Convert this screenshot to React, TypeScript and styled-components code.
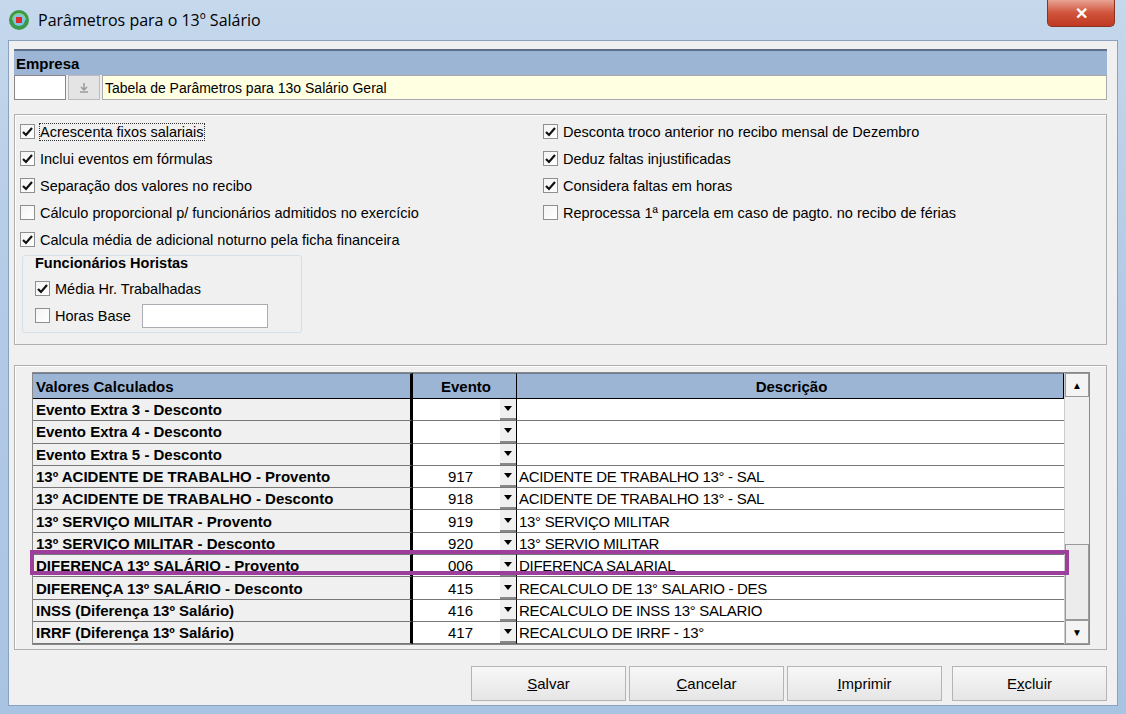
import styled, { createGlobalStyle } from "styled-components";

const Global = createGlobalStyle`
  html, body { margin: 0; padding: 0; }
  body { width: 1126px; height: 714px; overflow: hidden; font-family: "Liberation Sans", Tahoma, sans-serif; }
`;

const Frame = styled.div`
  width: 1126px;
  height: 714px;
  box-sizing: border-box;
  background: linear-gradient(180deg, #c5d8ec 0%, #b3cbe6 40%, #a9c3e2 100%);
  padding: 0 8px 8px 8px;
  display: flex;
  flex-direction: column;
`;

const TitleBar = styled.div`
  height: 42px;
  display: flex;
  align-items: center;
  gap: 8px;
  position: relative;
  font-family: "Open Sans", "Liberation Sans", sans-serif;
  font-size: 16px;
  color: #000;
`;

const CloseBtn = styled.div`
  position: absolute;
  right: 3px;
  top: 0;
  width: 66px;
  height: 26px;
  border-radius: 0 0 5px 5px;
  background: linear-gradient(180deg, #e8a493 0%, #d0533b 50%, #c03a22 100%);
  border: 1px solid #8c3020;
  border-top: none;
  display: flex;
  align-items: center;
  justify-content: center;
  color: #fff;
  font-weight: bold;
  font-size: 16px;
`;

const Body = styled.div`
  flex: 1;
  background: #f0f0f0;
  border: 1px solid #8aa2c0;
  padding: 8px 10px 4px 5px;
  display: flex;
  flex-direction: column;
`;

const SectionHeader = styled.div`
  height: 24px;
  background: #9db5d4;
  border-top: 2px solid #5d6f88;
  font-weight: bold;
  font-size: 15px;
  display: flex;
  align-items: center;
  padding-left: 2px;
`;

const EmpresaRow = styled.div`
  display: flex;
  height: 25px;
  gap: 2px;
`;

const SmallInput = styled.div`
  width: 50px;
  background: #fff;
  border: 1px solid #888;
`;

const LookupBtn = styled.div`
  width: 30px;
  background: #e4e4e4;
  border: 1px solid #bbb;
  display: flex;
  align-items: center;
  justify-content: center;
`;

const YellowField = styled.div`
  flex: 1;
  background: #ffffe1;
  border: 1px solid #aaa;
  font-size: 14px;
  display: flex;
  align-items: center;
  padding-left: 2px;
`;

const Panel = styled.div<{ $h: number; $mt: number }>`
  margin-top: ${(p) => p.$mt}px;
  height: ${(p) => p.$h}px;
  border: 1px solid #b0b0b0;
  box-shadow: inset 1px 1px 0 #fff;
  box-sizing: border-box;
`;

const CheckGrid = styled.div`
  display: grid;
  grid-template-columns: 523px 1fr;
  padding: 3px 0 0 5px;
`;

const Col = styled.div`
  display: flex;
  flex-direction: column;
`;

const CheckRow = styled.label`
  height: 27px;
  display: flex;
  align-items: center;
  gap: 5px;
  font-size: 14.5px;
  color: #000;
`;

const Box = styled.span`
  width: 15px;
  height: 15px;
  box-sizing: border-box;
  border: 1px solid #8e8f8f;
  background: linear-gradient(135deg, #f4f4f4, #fff);
  display: flex;
  align-items: center;
  justify-content: center;
`;

const Focused = styled.span`
  outline: 1px dotted #333;
`;

const GroupBox = styled.div`
  margin: 2px 0 0 2px;
  width: 280px;
  height: 78px;
  box-sizing: border-box;
  border: 1px solid #d5dfe5;
  border-radius: 3px;
  padding: 0 0 0 12px;
`;

const GroupTitle = styled.div`
  font-weight: bold;
  font-size: 14.5px;
  margin: -1px 0 0 0;
  height: 20px;
`;

const HorasInput = styled.div`
  width: 124px;
  height: 22px;
  background: #fff;
  border: 1px solid #abadb3;
  margin-left: 6px;
`;

const GridWrap = styled.div`
  margin: 6px 0 0 17px;
  width: 1056px;
  border: 1px solid #888;
  display: flex;
  position: relative;
`;

const Table = styled.div`
  flex: 1;
  display: grid;
  grid-template-columns: 380px 104px 1fr;
`;

const HeadCell = styled.div<{ $center?: boolean; $thick?: boolean }>`
  height: 24px;
  background: #9db5d4;
  font-weight: bold;
  font-size: 15px;
  display: flex;
  align-items: center;
  justify-content: ${(p) => (p.$center ? "center" : "flex-start")};
  padding-left: 3px;
  border-top: 1px solid #6b7d96;
  border-right: ${(p) => (p.$thick ? "3px solid #000" : "1px solid #000")};
  border-bottom: 1px solid #000;
`;

const NameCell = styled.div`
  height: 22.3px;
  box-sizing: border-box;
  background: #f0f0f0;
  border-right: 3px solid #000;
  border-bottom: 1px solid #777;
  font-weight: bold;
  font-size: 15px;
  padding-left: 3px;
  display: flex;
  align-items: center;
  white-space: nowrap;
`;

const EventCell = styled.div`
  height: 22.3px;
  box-sizing: border-box;
  background: #fff;
  border-bottom: 1px solid #777;
  border-right: 1px solid #000;
  display: flex;
  align-items: center;
  font-size: 15px;
  font-family: "Liberation Sans Narrow", "Liberation Sans", sans-serif;
`;

const EventValue = styled.span`
  flex: 1;
  text-align: center;
  padding-left: 8px;
`;

const DropBtn = styled.span`
  width: 16px;
  height: 100%;
  background: #f0f0f0;
  border-bottom: 2px solid #888;
  box-sizing: border-box;
  display: flex;
  align-items: center;
  justify-content: center;
`;

const DescCell = styled.div`
  height: 22.3px;
  box-sizing: border-box;
  background: #fff;
  border-bottom: 1px solid #777;
  font-size: 15px;
  font-family: "Liberation Sans Narrow", "Liberation Sans", sans-serif;
  letter-spacing: -0.3px;
  padding-left: 2px;
  display: flex;
  align-items: center;
  white-space: nowrap;
`;

const ScrollBar = styled.div`
  width: 24px;
  background: #f0f0f0;
  border-left: 1px solid #ccc;
  display: flex;
  flex-direction: column;
`;

const ScrollArrow = styled.div`
  height: 22px;
  border: 1px solid #999;
  background: #f4f4f4;
  display: flex;
  align-items: center;
  justify-content: center;
  font-size: 10px;
`;

const ScrollTrack = styled.div`
  flex: 1;
  background: #f0f0f0;
  display: flex;
  flex-direction: column;
  justify-content: flex-end;
`;

const Thumb = styled.div`
  height: 74px;
  border: 1px solid #9a9a9a;
  background: #ececec;
`;

const Highlight = styled.div`
  position: absolute;
  left: -3px;
  right: 20px;
  top: 177px;
  height: 25px;
  border: 4px solid #9c3f9c;
  box-sizing: border-box;
  pointer-events: none;
`;

const Buttons = styled.div`
  display: flex;
  justify-content: flex-end;
  gap: 3px;
  margin-top: 16px;
`;

const Btn = styled.div<{ $gap?: number }>`
  width: 155px;
  height: 35px;
  box-sizing: border-box;
  margin-left: ${(p) => p.$gap ?? 0}px;
  border: 1px solid #b4b4b4;
  background: linear-gradient(180deg, #f7f7f7, #e6e6e6);
  display: flex;
  align-items: center;
  justify-content: center;
  font-size: 15px;
  font-family: "Liberation Sans Narrow", "Liberation Sans", sans-serif;
`;

const Check = () => (
  <svg width="11" height="10" viewBox="0 0 11 10">
    <path d="M1 5 L4 8 L10 1" fill="none" stroke="#111" strokeWidth="2.2" />
  </svg>
);

const CB = ({ on, label, focus }: { on?: boolean; label: string; focus?: boolean }) => (
  <CheckRow>
    <Box>{on && <Check />}</Box>
    {focus ? <Focused>{label}</Focused> : label}
  </CheckRow>
);

const Arrow = () => (
  <svg width="8" height="5" viewBox="0 0 8 5">
    <path d="M0 0 H8 L4 5Z" fill="#000" />
  </svg>
);

const rows: [string, string, string][] = [
  ["Evento Extra 3 - Desconto", "", ""],
  ["Evento Extra 4 - Desconto", "", ""],
  ["Evento Extra 5 - Desconto", "", ""],
  ["13º ACIDENTE DE TRABALHO - Provento", "917", "ACIDENTE DE TRABALHO 13° - SAL"],
  ["13º ACIDENTE DE TRABALHO - Desconto", "918", "ACIDENTE DE TRABALHO 13° - SAL"],
  ["13º SERVIÇO MILITAR - Provento", "919", "13° SERVIÇO MILITAR"],
  ["13º SERVIÇO MILITAR - Desconto", "920", "13° SERVIO MILITAR"],
  ["DIFERENÇA 13º SALÁRIO - Provento", "006", "DIFERENCA SALARIAL"],
  ["DIFERENÇA 13º SALÁRIO - Desconto", "415", "RECALCULO DE 13° SALARIO - DES"],
  ["INSS (Diferença 13º Salário)", "416", "RECALCULO DE INSS 13° SALARIO"],
  ["IRRF (Diferença 13º Salário)", "417", "RECALCULO DE IRRF - 13°"],
];

export default function App() {
  return (
    <>
      <Global />
      <Frame>
        <TitleBar>
          <svg width="22" height="22" viewBox="0 0 22 22">
            <circle cx="11" cy="11" r="10" fill="#3a9a4a" />
            <path d="M4 11 A7 7 0 0 1 18 11Z" fill="#9bd36a" />
            <circle cx="11" cy="11" r="6" fill="#7cc3e6" />
            <rect x="8" y="8" width="6" height="6" fill="#e02a2a" />
          </svg>
          Parâmetros para o 13º Salário
          <CloseBtn>✕</CloseBtn>
        </TitleBar>
        <Body>
          <SectionHeader>Empresa</SectionHeader>
          <EmpresaRow>
            <SmallInput />
            <LookupBtn>
              <svg width="10" height="10" viewBox="0 0 10 10">
                <path d="M5 0 V6 M2 4 L5 7 L8 4 M1 9 H9" fill="none" stroke="#9a9a9a" strokeWidth="1.5" />
              </svg>
            </LookupBtn>
            <YellowField>Tabela de Parâmetros para 13o Salário Geral</YellowField>
          </EmpresaRow>
          <Panel $h={231} $mt={14}>
            <CheckGrid>
              <Col>
                <CB on focus label="Acrescenta fixos salariais" />
                <CB on label="Inclui eventos em fórmulas" />
                <CB on label="Separação dos valores no recibo" />
                <CB label="Cálculo proporcional p/ funcionários admitidos no exercício" />
                <CB on label="Calcula média de adicional noturno pela ficha financeira" />
                <GroupBox>
                  <GroupTitle>Funcionários Horistas</GroupTitle>
                  <CB on label="Média Hr. Trabalhadas" />
                  <CheckRow>
                    <Box />
                    Horas Base
                    <HorasInput />
                  </CheckRow>
                </GroupBox>
              </Col>
              <Col>
                <CB on label="Desconta troco anterior no recibo mensal de Dezembro" />
                <CB on label="Deduz faltas injustificadas" />
                <CB on label="Considera faltas em horas" />
                <CB label="Reprocessa 1ª parcela em caso de pagto. no recibo de férias" />
              </Col>
            </CheckGrid>
          </Panel>
          <Panel $h={285} $mt={20}>
            <GridWrap>
              <Table>
                <HeadCell $thick>Valores Calculados</HeadCell>
                <HeadCell $center>Evento</HeadCell>
                <HeadCell $center>Descrição</HeadCell>
                {rows.map(([n, e, d]) => (
                  <>
                    <NameCell key={n}>{n}</NameCell>
                    <EventCell>
                      <EventValue>{e}</EventValue>
                      <DropBtn>
                        <Arrow />
                      </DropBtn>
                    </EventCell>
                    <DescCell>{d}</DescCell>
                  </>
                ))}
              </Table>
              <ScrollBar>
                <ScrollArrow>▲</ScrollArrow>
                <ScrollTrack>
                  <Thumb />
                </ScrollTrack>
                <ScrollArrow>▼</ScrollArrow>
              </ScrollBar>
              <Highlight />
            </GridWrap>
          </Panel>
          <Buttons>
            <Btn><u>S</u>alvar</Btn>
            <Btn><u>C</u>ancelar</Btn>
            <Btn><u>I</u>mprimir</Btn>
            <Btn $gap={7}>E<u>x</u>cluir</Btn>
          </Buttons>
        </Body>
      </Frame>
    </>
  );
}
